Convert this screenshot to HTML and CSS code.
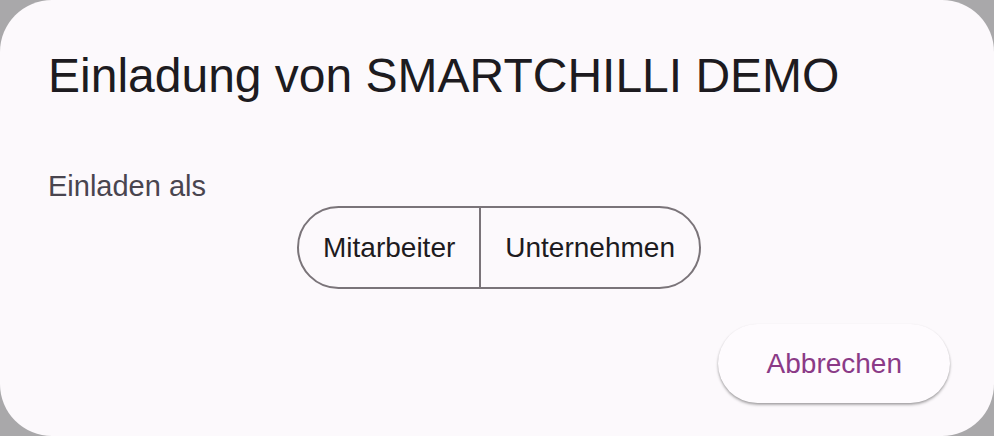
FILE: index.html
```html
<!DOCTYPE html>
<html lang="de">
<head>
    <meta charset="UTF-8">
    <meta name="viewport" content="width=device-width, initial-scale=1.0">
    <title>Einladung</title>
    <link rel="stylesheet" href="styles.css">
</head>
<body>
    <div class="dialog">
        <h2 class="dialog-title">Einladung von SMARTCHILLI DEMO</h2>

        <p class="field-label">Einladen als</p>
        <div class="segments">
            <button type="button" class="segment">Mitarbeiter</button>
            <button type="button" class="segment">Unternehmen</button>
        </div>

        <div class="dialog-actions">
            <button type="button" class="cancel-button">Abbrechen</button>
        </div>
    </div>
</body>
</html>
```

FILE: styles.css
```css
/* Basic reset */
* {
    margin: 0;
    padding: 0;
    box-sizing: border-box;
    font-family: "Liberation Sans", Arial, sans-serif;
}

body {
    width: 994px;
    height: 436px;
    background-color: #a9a8aa;
    overflow: hidden;
}

.dialog {
    display: flex;
    flex-direction: column;
    width: 994px;
    height: 436px;
    background: #fcf9fc;
    border-radius: 52px;
    padding: 52px 44px 0 48px;
}

.dialog-title {
    font-size: 48px;
    font-weight: normal;
    line-height: 1;
    color: #1d1b20;
}

.field-label {
    margin-top: 72px;
    font-size: 29px;
    line-height: 1;
    color: #49454f;
}

.segments {
    display: flex;
    align-self: center;
    margin-top: 5px;
    height: 83px;
    border: 2px solid #7a7479;
    border-radius: 42px;
    overflow: hidden;
}

.segment {
    display: flex;
    align-items: center;
    padding: 0 24px;
    border: none;
    background: none;
    font-size: 28px;
    color: #1d1b20;
    cursor: pointer;
}

.segment + .segment {
    border-left: 2px solid #7a7479;
}

.dialog-actions {
    display: flex;
    justify-content: flex-end;
    margin-top: 35px;
}

.cancel-button {
    height: 79px;
    padding: 0 48px 0 49px;
    border: none;
    border-radius: 40px;
    background: #fefbfe;
    color: #8b3a87;
    font-size: 28px;
    cursor: pointer;
    box-shadow: 0 2px 3px rgba(0, 0, 0, 0.28), 0 1px 2px rgba(0, 0, 0, 0.12);
}
```
